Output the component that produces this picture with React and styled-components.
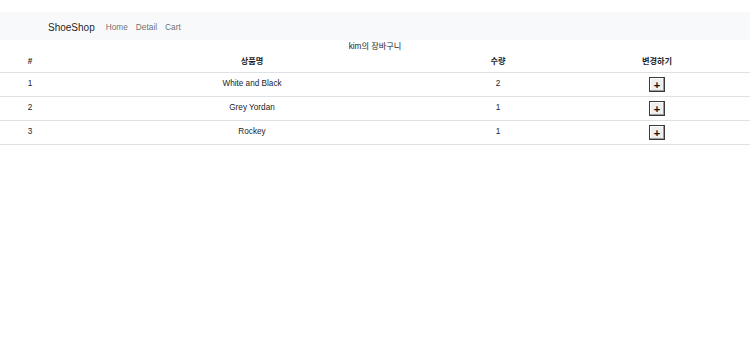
import React from "react";
import styled, { createGlobalStyle } from "styled-components";

const Global = createGlobalStyle`
  html, body { margin: 0; padding: 0; background: #fff; }
  body {
    font-family: "Liberation Sans", Arial, "Noto Sans CJK KR", sans-serif;
    font-size: 8.2px;
    line-height: 1.5;
    color: #212529;
  }
`;

const Page = styled.div`
  padding-top: 12px;
`;

const NavBar = styled.nav`
  height: 28px;
  box-sizing: border-box;
  padding-top: 2px;
  background: #f8f9fa;
  display: flex;
  align-items: center;
  padding-left: 48px;
`;

const Brand = styled.span`
  font-size: 10px;
  color: rgba(0, 0, 0, 0.9);
  margin-right: 7px;
`;

const NavLink = styled.a`
  font-size: 8.3px;
  color: rgba(0, 0, 0, 0.6);
  padding: 0 4px;
  text-decoration: none;
`;

const Title = styled.div`
  text-align: center;
  height: 12px;
  line-height: 12px;
  padding-top: 1px;
`;

const Table = styled.table`
  width: 100%;
  border-collapse: collapse;
  table-layout: fixed;
`;

const Th = styled.th`
  width: ${(p) => p.$w || "auto"};
  font-weight: 700;
  text-align: center;
  height: 19px;
  padding: 0 0 0 ${(p) => p.$pl || "0"};
  border-bottom: 1px solid #dee2e6;
  vertical-align: middle;
`;

const Td = styled.td`
  text-align: center;
  height: 23px;
  padding: 0 0 0 ${(p) => p.$pl || "0"};
  border-bottom: 1px solid #dee2e6;
  vertical-align: middle;
`;

const PlusButton = styled.button`
  width: 16px;
  height: 15px;
  padding: 0;
  box-sizing: border-box;
  border: 1px solid #3a3a3a;
  background: #efefef;
  box-shadow: inset -1px -1px 0 #9a9a9a, inset 1px 1px 0 #fff;
  font-family: "Liberation Sans", Arial, sans-serif;
  font-size: 11px;
  font-weight: 700;
  line-height: 12px;
  color: #111;
  display: inline-flex;
  align-items: center;
  justify-content: center;
  vertical-align: middle;
`;

const items = [
  { id: 1, name: "White and Black", qty: 2 },
  { id: 2, name: "Grey Yordan", qty: 1 },
  { id: 3, name: "Rockey", qty: 1 },
];

export default function App() {
  return (
    <Page>
      <Global />
      <NavBar>
        <Brand>ShoeShop</Brand>
        <NavLink>Home</NavLink>
        <NavLink>Detail</NavLink>
        <NavLink>Cart</NavLink>
      </NavBar>
      <Title>kim의 장바구니</Title>
      <Table>
        <thead>
          <tr>
            <Th $w="60px">#</Th>
            <Th $w="384px">상품명</Th>
            <Th $w="108px">수량</Th>
            <Th $pl="12px">변경하기</Th>
          </tr>
        </thead>
        <tbody>
          {items.map((it) => (
            <tr key={it.id}>
              <Td>{it.id}</Td>
              <Td>{it.name}</Td>
              <Td>{it.qty}</Td>
              <Td $pl="12px">
                <PlusButton>+</PlusButton>
              </Td>
            </tr>
          ))}
        </tbody>
      </Table>
    </Page>
  );
}
